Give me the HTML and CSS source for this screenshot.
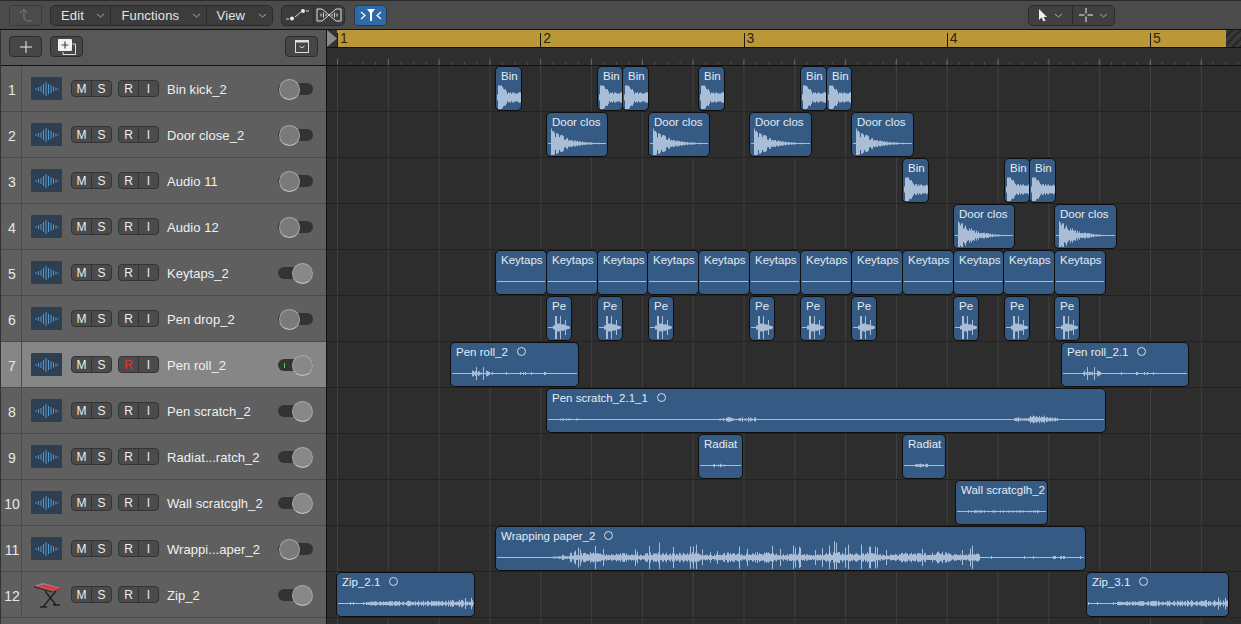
FILE: index.html
```html
<!DOCTYPE html>
<html lang="en">
  <head>
    <meta charset="UTF-8" />
    <title>Tracks</title>
    <link rel="stylesheet" href="styles.css">
  </head>
  <body>
    <div class="toolbar">
      <button class="tool tool-back">
        <svg width="16" height="16" viewBox="0 0 16 16"><path d="M2 6 L6 2 L9 6 M6 2 V10 Q6 14 11 14 H14" fill="none" stroke="#7c7c7c" stroke-width="1"/></svg>
      </button>
      <div class="tool-group menus">
        <div class="menu menu-edit">Edit<svg class="chev" width="9" height="5" viewBox="0 0 9 5"><path d="M1 1 L4.5 4 L8 1" fill="none" stroke="#aaa"/></svg></div>
        <div class="menu menu-functions">Functions<svg class="chev" width="9" height="5" viewBox="0 0 9 5"><path d="M1 1 L4.5 4 L8 1" fill="none" stroke="#aaa"/></svg></div>
        <div class="menu menu-view">View<svg class="chev" width="9" height="5" viewBox="0 0 9 5"><path d="M1 1 L4.5 4 L8 1" fill="none" stroke="#aaa"/></svg></div>
      </div>
      <div class="tool-group modes">
        <div class="mode">
          <svg width="26" height="14" viewBox="0 0 26 14"><path d="M2 11 H5 M11 9 L17 4 M22 3 H25" stroke="#ddd" fill="none"/><circle cx="8" cy="10.500" r="2" fill="#eee"/><circle cx="19" cy="3" r="2" fill="#eee"/></svg>
        </div>
        <div class="mode">
          <svg width="26" height="16" viewBox="0 0 26 16"><path d="M1 2 H6 L13 8 L20 2 H25 V14 H20 L13 8 L6 14 H1 Z" stroke="#ddd" fill="none"/><path d="M5 6.500 V9.500 M7.500 5.500 V10.500 M10 7 V9 M16 7 V9 M18.500 5.500 V10.500 M21 6.500 V9.500" stroke="#ddd" fill="none"/></svg>
        </div>
      </div>
      <button class="tool tool-catch">
        <svg width="26" height="14" viewBox="0 0 26 14"><path d="M3 4 L7 7.500 L3 11 M23 4 L19 7.500 L23 11" stroke="#fff" fill="none" stroke-width="1.200"/><path d="M9 1 H17 L14 5 V13 H12 V5 Z" fill="#fff"/></svg>
      </button>
      <div class="tool-group pointers">
        <div class="pointer">
          <svg width="10" height="14" viewBox="0 0 10 14"><path d="M1 1 L1 12 L3.500 9.500 L5.500 13.500 L7.500 12.500 L5.500 9 L9 9 Z" fill="#eee"/></svg>
          <svg class="chev" width="9" height="5" viewBox="0 0 9 5"><path d="M1 1 L4.500 4 L8 1" fill="none" stroke="#aaa"/></svg>
        </div>
        <div class="pointer">
          <svg width="14" height="14" viewBox="0 0 14 14"><path d="M0 7 H5.500 M8.500 7 H14 M7 0 V5.500 M7 8.500 V14" stroke="#eee" fill="none"/></svg>
          <svg class="chev" width="9" height="5" viewBox="0 0 9 5"><path d="M1 1 L4.500 4 L8 1" fill="none" stroke="#aaa"/></svg>
        </div>
      </div>
    </div>

    <div class="main">
      <div class="tracks">
        <div class="tracks-head">
          <button class="tool">
            <svg width="12" height="12" viewBox="0 0 12 12"><path d="M0 6 H12 M6 0 V12" stroke="#eee" fill="none"/></svg>
          </button>
          <button class="tool">
            <svg width="18" height="16" viewBox="0 0 18 16"><path d="M14.500 5 H17.500 V15.500 H5 V13" fill="none" stroke="#ddd"/><rect x="0" y="0" width="14" height="12" rx="1" fill="#f2f2f2"/><path d="M3.500 6 H10.500 M7 2.500 V9.500" stroke="#444" stroke-width="1.200" fill="none"/></svg>
          </button>
          <button class="tool tool-list">
            <svg width="14" height="13" viewBox="0 0 14 13"><rect x="0.500" y="0.500" width="13" height="12" fill="none" stroke="#ddd"/><rect x="0.500" y="0.500" width="13" height="2" fill="#ddd"/><path d="M4.500 6 L7 8 L9.500 6" fill="none" stroke="#ddd"/></svg>
          </button>
        </div>
        <div class="track-list" id="trackList"></div>
      </div>

      <div class="arrange">
        <div class="ruler">
          <div class="locator"></div>
          <div class="cycle" id="cycle"></div>
          <div class="hatch"></div>
        </div>
        <div class="ticks"></div>
        <div class="lanes" id="lanes"></div>
      </div>
    </div>

    <script src="app.js"></script>
  </body>
</html>
```

FILE: styles.css
```css
* {
  box-sizing: border-box;
}
html, body {
  margin: 0;
  height: 624px;
  overflow: hidden;
}
body {
  font-family: 'Liberation Sans', Arial, sans-serif;
  background-color: #2d2d2d;
  color: #eee;
  width: 1241px;
}
button {
  font: inherit;
  padding: 0;
}

/* top bar */
.toolbar {
  height: 30px;
  background-color: #4b4b4b;
  border-top: 1px solid #2a2a2a;
  border-bottom: 1px solid #111;
  display: flex;
  align-items: center;
  padding: 0 0 0 9px;
}
.tool {
  width: 33px;
  height: 21px;
  display: flex;
  align-items: center;
  justify-content: center;
  background-color: #464646;
  border: 1px solid #2c2c2c;
  border-radius: 4px;
}
.tool-back {
  background-color: #4b4b4b;
  border-color: #3a3a3a;
}
.tool-group {
  height: 21px;
  display: flex;
  background-color: #3c3c3c;
  border: 1px solid #2a2a2a;
  border-radius: 5px;
}
.menus {
  margin-left: 8px;
  width: 223px;
}
.menu {
  display: flex;
  align-items: center;
  justify-content: space-between;
  padding: 0 5px 0 10px;
  font-size: 13px;
  letter-spacing: 0.15px;
  color: #e4e4e4;
  border-left: 1px solid #2a2a2a;
}
.menu:first-child {
  border-left: 0;
}
.menu-edit {
  width: 60px;
}
.menu-functions {
  width: 96px;
}
.menu-view {
  width: 67px;
}
.modes {
  margin-left: 8px;
  width: 64px;
}
.mode {
  flex: 1;
  display: flex;
  align-items: center;
  justify-content: center;
  border-left: 1px solid #2a2a2a;
}
.mode:first-child {
  border-left: 0;
}
.tool-catch {
  margin-left: 9px;
  background-color: #2f6aa8;
  border-color: #2a3a4c;
}
.pointers {
  margin-left: 641px;
  width: 87px;
  background-color: #404040;
}
.pointer {
  width: 43px;
  display: flex;
  align-items: center;
  justify-content: center;
  gap: 6px;
  border-left: 1px solid #2a2a2a;
}
.pointer:first-child {
  border-left: 0;
}

.main {
  display: flex;
  height: 594px;
}

/* track column */
.tracks {
  width: 327px;
  flex: none;
  background-color: #5f5f5f;
  border-left: 1px solid #333;
  border-right: 1px solid #111;
}
.tracks-head {
  height: 36px;
  display: flex;
  align-items: flex-start;
  gap: 8px;
  padding: 6px 0 0 8px;
  background-color: #585858;
  border-bottom: 1px solid #111;
}
.tool-list {
  margin-left: 194px;
}
.track {
  height: 46px;
  display: flex;
  align-items: center;
  border-bottom: 1px solid #4b4b4b;
  background-color: #5f5f5f;
}
.track-selected {
  background-color: #868686;
}
.track-num {
  width: 21px;
  height: 100%;
  flex: none;
  border-right: 1px solid #4b4b4b;
  font-size: 14px;
  color: #e8e8e8;
  display: flex;
  align-items: center;
  justify-content: center;
  padding: 2px 0 0 2px;
}
.track-icon {
  width: 31px;
  height: 23px;
  margin-left: 9px;
  flex: none;
  display: flex;
  align-items: center;
  justify-content: center;
  background-color: #2f3f52;
  border-radius: 1px;
}
.track-icon-plain {
  background-color: transparent;
}
.btn-pair {
  width: 41px;
  height: 17px;
  flex: none;
  display: flex;
  background-color: #4b4b4b;
  border: 1px solid #333;
  border-radius: 4px;
  font-size: 12px;
  color: #eee;
}
.btn-pair span {
  flex: 1;
  display: flex;
  align-items: center;
  justify-content: center;
  border-left: 1px solid #333;
}
.btn-pair span:first-child {
  border-left: 0;
}
.btn-ms {
  margin-left: 9px;
}
.btn-ri {
  margin-left: 6px;
}
.btn-pair .armed {
  color: #e8302c;
}
.track-name {
  width: 111px;
  margin-left: 8px;
  padding-top: 2px;
  flex: none;
  font-size: 13px;
  color: #f0f0f0;
  white-space: nowrap;
  letter-spacing: 0.05px;
}
.toggle {
  position: relative;
  width: 35px;
  height: 12px;
  margin-top: 1px;
  flex: none;
  background-color: #333;
  border-radius: 6px;
}
.toggle::after {
  content: "";
  position: absolute;
  top: -4px;
  left: 1px;
  width: 19px;
  height: 19px;
  border-radius: 50%;
  background-color: #7a7a7a;
  border: 1px solid #a8a8a8;
  border-bottom-color: #c8c8c8;
}
.toggle-on::after {
  left: 14px;
  background-color: #888;
}
.toggle-lit::before {
  content: "";
  position: absolute;
  top: 4px;
  left: 6px;
  width: 1px;
  height: 5px;
  background-color: #4fd45a;
}

/* timeline */
.arrange {
  flex: 1;
  position: relative;
  min-width: 0;
}
.ruler {
  height: 18px;
  display: flex;
  background-color: #333;
  border-bottom: 1px solid #111;
}
.locator {
  width: 10px;
  flex: none;
  clip-path: polygon(0 0, 100% 50%, 0 100%);
  background-color: #8a8a8a;
}
.cycle {
  width: 889px;
  flex: none;
  position: relative;
  background-color: #bb9837;
}
.bar-mark {
  position: absolute;
  top: 3px;
  bottom: 0;
  width: 1px;
  background-color: #1a1a1a;
}
.bar-mark span {
  position: absolute;
  top: -3px;
  left: 3px;
  font-size: 14px;
  color: #2b2410;
}
.hatch {
  flex: 1;
  background: repeating-linear-gradient(135deg, #3a3a3a 0 3px, #2a2a2a 3px 6px);
}
.ticks {
  height: 18px;
  background-color: #2f2f2f;
  border-bottom: 1px solid #111;
  background-image:
    linear-gradient(90deg, #686868 1px, transparent 1px),
    linear-gradient(90deg, #4f4f4f 1px, transparent 1px);
  background-size: 50.8125px 6px, 12.703px 3px;
  background-position: 10px 100%, 10px 100%;
  background-repeat: repeat-x;
}
.lanes {
  background-image: linear-gradient(90deg, #414141 1px, transparent 1px);
  background-size: 50.8125px 100%;
  background-position: 10px 0;
  height: 560px;
}
.lane {
  position: relative;
  height: 46px;
  border-bottom: 1px solid #222;
}
.region {
  position: absolute;
  top: 0;
  height: 45px;
  background-color: #355b84;
  border: 1px solid #0e0e0e;
  border-radius: 5px;
  overflow: hidden;
  font-size: 11.5px;
  color: #e4ebf3;
}
.region-title {
  display: flex;
  align-items: center;
  height: 17px;
  padding-left: 5px;
  white-space: nowrap;
}
.loop-dot {
  width: 9px;
  height: 9px;
  margin-left: 9px;
  flex: none;
  border: 1px solid #d4dde8;
  border-radius: 50%;
}
.region-wave {
  position: absolute;
  left: 0;
  top: 0;
}
```

FILE: app.js
```js
const BAR = 203.25;

const tracks = [
  { name: "Bin kick_2", on: false },
  { name: "Door close_2", on: false },
  { name: "Audio 11", on: false },
  { name: "Audio 12", on: false },
  { name: "Keytaps_2", on: true },
  { name: "Pen drop_2", on: false },
  { name: "Pen roll_2", on: true, selected: true },
  { name: "Pen scratch_2", on: true },
  { name: "Radiat...ratch_2", on: true },
  { name: "Wall scratcglh_2", on: true },
  { name: "Wrappi...aper_2", on: false },
  { name: "Zip_2", on: true, keys: true },
];

// [left edge on screen, right edge on screen, name, wave kind, loop dot]
const regions = [
  [[496, 522, "Bin", "bin"], [598, 623, "Bin", "bin"], [623, 649, "Bin", "bin"], [699, 725, "Bin", "bin"], [801, 827, "Bin", "bin"], [827, 852, "Bin", "bin"]],
  [[547, 608, "Door clos", "door"], [649, 710, "Door clos", "door"], [750, 812, "Door clos", "door"], [852, 914, "Door clos", "door"]],
  [[903, 929, "Bin", "bin"], [1005, 1030, "Bin", "bin"], [1030, 1056, "Bin", "bin"]],
  [[954, 1015, "Door clos", "door"], [1055, 1117, "Door clos", "door"]],
  [496, 547, 598, 648, 699, 750, 801, 852, 903, 954, 1004, 1055].map((x, i, all) => [x, all[i + 1] || 1106, "Keytaps", "flat"]),
  [547, 598, 649, 750, 801, 852, 954, 1005, 1055].map((x) => [x, x + 25, "Pe", "pe"]),
  [[451, 579, "Pen roll_2", "roll", true], [1062, 1189, "Pen roll_2.1", "roll", true]],
  [[547, 1106, "Pen scratch_2.1_1", "scratch", true]],
  [[699, 743, "Radiat", "radiat"], [903, 946, "Radiat", "radiat"]],
  [[956, 1048, "Wall scratcglh_2", "wall"]],
  [[496, 1086, "Wrapping paper_2", "paper", true]],
  [[337, 475, "Zip_2.1", "zip", true], [1087, 1229, "Zip_3.1", "zip", true]],
];

// small repeatable random so each region looks the same on each load
function noise(seed) {
  let s = seed;
  return () => {
    s = (s * 9301 + 49297) % 233280;
    return s / 233280;
  };
}

function amplitude(kind, x, w, r) {
  switch (kind) {
    case "bin":
      if (x < 1) return 3;
      if (x < 4) return 12;
      if (x < 10) return 12 - (x - 3) * 1.1 + r * 2;
      return 3.5 + r * 2;
    case "door":
      if (x < 3) return 0.5;
      return Math.max(0.5, 12.5 * Math.exp(-(x - 5) / 15) * (0.55 + r * 0.65));
    case "pe":
      if (x < 5) return 0.5;
      if (x === 7 || x === 8 || x === 12) return 11.5;
      if (x === 17) return 7.5;
      return x < 9 ? 2 : Math.max(0.5, (5.5 - (x - 9) * 0.36) * (0.7 + r * 0.3));
    case "roll":
      if (x === 24 || x === 31) return 6.5;
      if (x > 19 && x < 30) return r * 2.5 + 0.5;
      if (x > 33 && x < 38) return 3 - (x - 34) * 0.5;
      if (x > 37 && x < 95 && r > 0.85) return 1.5;
      return 0.5;
    case "scratch":
      if (x > 10 && x < 35 && r > 0.75) return 1;
      if (x > 170 && x < 210) return r * r * 2 + 0.5;
      if (x > 465 && x < 510) return r * 1.6 + 0.8 + (x > 480 && x < 500 ? r * 2 : 0);
      return 0.5;
    case "radiat":
      return x > 10 && x < 25 && r > 0.3 ? r * 1.5 + 0.5 : 0.5;
    case "wall":
      return x > 8 && x < 85 && r > 0.55 ? r * 1.4 : 0.5;
    case "paper": {
      if (x < 52) return 0.5;
      if (x > 482) return r > 0.94 || (x > 555 && x < 570 && r > 0.5) ? 1.5 : 0.5;
      const swell = 0.7 + 0.3 * Math.sin(x / 8) * Math.sin(x / 19);
      const fade = Math.min(1, (x - 52) / 45);
      const spike = r > 0.88 ? 5 + (r - 0.88) * 50 : 0;
      return 0.5 + (2 + r * 4.5 + spike) * swell * fade;
    }
    case "zip": {
      const t = x / w;
      if (t < 0.2) return r > 0.9 ? 1.5 : 0.5;
      return 0.8 + r * (0.8 + t * 2.6) + (t > 0.9 && r > 0.8 ? 2 : 0);
    }
    default:
      return 0.5;
  }
}

const WAVE_CENTER = 30;

function waveSvg(kind, w, seed) {
  const rand = noise(seed);
  const cy = WAVE_CENTER;
  let d = "M1 " + (cy + 0.5) + " H" + (w - 3) + " ";
  for (let x = 0; x < w - 3; x++) {
    const a = amplitude(kind, x, w, rand());
    if (a > 0.6) {
      d += "M" + (x + 1.5) + " " + (cy + 0.5 - a).toFixed(1) + " V" + (cy + 0.5 + a).toFixed(1) + " ";
    }
  }
  return '<svg class="region-wave" width="' + w + '" height="42" viewBox="0 0 ' + w + ' 42"><path d="' + d + '" stroke="#a9bdd7" fill="none"/></svg>';
}

const AUDIO_ICON =
  '<svg width="24" height="16" viewBox="0 0 24 16"><path d="M1 7 V9 M3.500 6 V10 M6 5 V11 M8.500 3 V13 M11 1 V15 M13.500 3 V13 M16 4 V12 M18.500 5.500 V10.500 M21 6.500 V9.500 M23 7.500 V8.500" stroke="#4f9bd9" fill="none"/></svg>';
const KEYS_ICON =
  '<svg width="30" height="26" viewBox="0 0 30 26"><path d="M2 4 L11 1 L29 6 L20 9 Z" fill="#8d8d8d"/><path d="M5 4 L12 2.500 L28 6.500 L20 8 Z" fill="#e0343f"/><path d="M2 4 L20 9 V10.500 L2 5.500 Z" fill="#5a1f26"/><path d="M20 9 L29 6 V7.500 L20 10.500 Z" fill="#a0303a"/><path d="M13 9 L24 23 M24 9 L11 25 M8 25 H15 M21 23 H28" stroke="#202020" stroke-width="1.300" fill="none"/></svg>';

const trackList = document.getElementById("trackList");
const lanes = document.getElementById("lanes");
const cycle = document.getElementById("cycle");

tracks.forEach((t, i) => {
  const row = document.createElement("div");
  row.className = "track" + (t.selected ? " track-selected" : "");
  row.innerHTML =
    '<div class="track-num">' + (i + 1) + "</div>" +
    '<div class="track-icon' + (t.keys ? " track-icon-plain" : "") + '">' + (t.keys ? KEYS_ICON : AUDIO_ICON) + "</div>" +
    '<div class="btn-pair btn-ms"><span>M</span><span>S</span></div>' +
    '<div class="btn-pair btn-ri"><span' + (t.selected ? ' class="armed"' : "") + ">R</span><span>I</span></div>" +
    '<div class="track-name">' + t.name + "</div>" +
    '<div class="toggle' + (t.on ? " toggle-on" : "") + (t.selected ? " toggle-lit" : "") + '"></div>';
  trackList.appendChild(row);

  const lane = document.createElement("div");
  lane.className = "lane";
  regions[i].forEach((r, j) => {
    const w = r[1] - r[0] + 1;
    const el = document.createElement("div");
    el.className = "region";
    el.style.left = r[0] - 328 + "px";
    el.style.width = w + "px";
    el.innerHTML =
      waveSvg(r[3], w, i * 37 + (r[3] === "bin" || r[3] === "door" || r[3] === "pe" ? 5 : j * 11 + 3)) +
      '<div class="region-title"><span>' + r[2] + "</span>" + (r[4] ? '<span class="loop-dot"></span>' : "") + "</div>";
    lane.appendChild(el);
  });
  lanes.appendChild(lane);
});

for (let bar = 0; bar < 5; bar++) {
  const mark = document.createElement("div");
  mark.className = "bar-mark";
  mark.style.left = bar * BAR + "px";
  mark.innerHTML = "<span>" + (bar + 1) + "</span>";
  cycle.appendChild(mark);
}
```
